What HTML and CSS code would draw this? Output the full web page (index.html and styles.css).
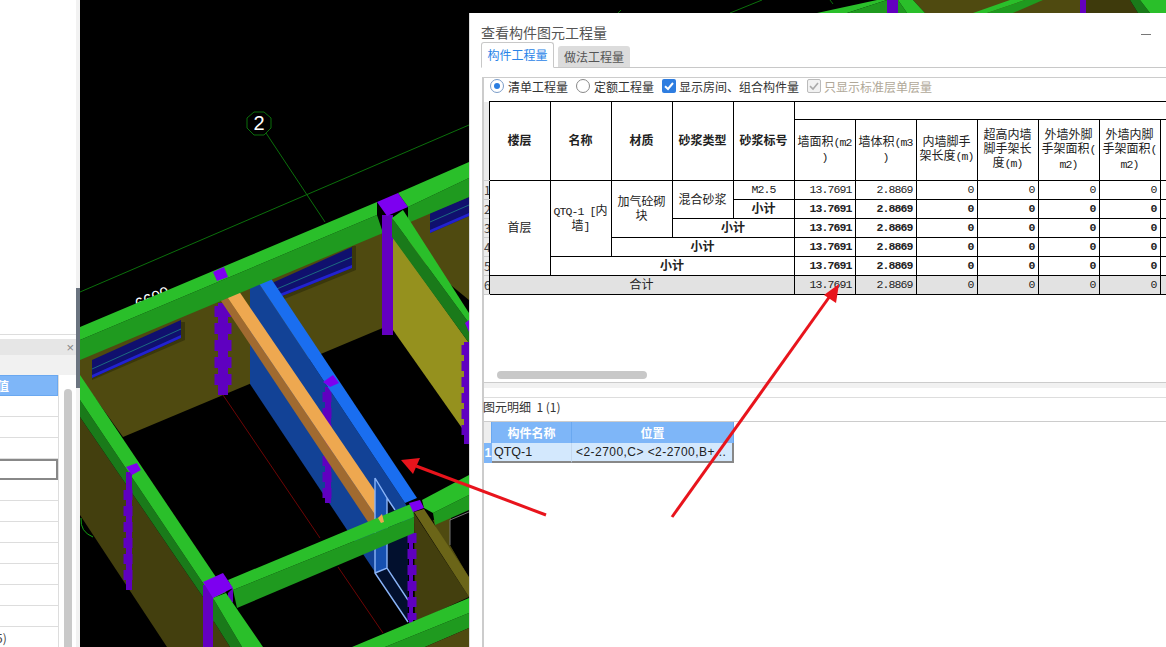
FILE: index.html
```html
<!DOCTYPE html>
<html lang="zh">
<head>
<meta charset="utf-8">
<title>查看构件图元工程量</title>
<link rel="stylesheet" href="styles.css">
</head>
<body>
<div class="app">
  <aside class="left">
    <div class="left-top"></div>
    <div class="left-head"><span class="left-close">×</span></div>
    <div class="left-sub"></div>
    <div class="left-body">
      <div class="list">
        <div class="list-head">值</div>
        <div class="list-row"></div>
        <div class="list-row"></div>
        <div class="list-row"></div>
        <div class="list-row sel"></div>
        <div class="list-row"></div>
        <div class="list-row"></div>
        <div class="list-row"></div>
        <div class="list-row"></div>
        <div class="list-row"></div>
        <div class="list-row"></div>
        <div class="list-row"></div>
        <div class="list-row">5)</div>
      </div>
      <div class="left-scroll"><div class="left-thumb"></div></div>
    </div>
  </aside>
  <div class="splitter"><div class="splitter-grip"></div></div>
  <main class="canvas">
    <svg class="scene" width="1086" height="647" viewBox="80 0 1086 647" xmlns="http://www.w3.org/2000/svg">
      <!-- grid -->
      <g fill="none" stroke="#0b6f0b" stroke-width="1">
        <line x1="80" y1="292" x2="469" y2="125"/>
        <line x1="266" y1="133" x2="325" y2="222"/>
        <polygon points="254,112 264,112 271,118 271,128 264,135 254,135 247,128 247,118"/>
        <line x1="730" y1="13" x2="762" y2="0"/>
        <line x1="830" y1="0" x2="833" y2="4"/>
        <line x1="618" y1="13" x2="621" y2="10"/>
        <path d="M81 518 Q80 532 93 537" stroke="#12a012"/>
      </g>
      <text class="axis" x="259" y="130" text-anchor="middle">2</text>
      <text class="dim" x="138" y="310" transform="rotate(-23 138 310)">6600</text>
      <g stroke="#6d0505" stroke-width="1">
        <line x1="223" y1="395" x2="320" y2="538"/>
        <line x1="338" y1="567" x2="383" y2="633"/>
      </g>

      <!-- back wall -->
      <polygon fill="#4f4a10" points="80,358 385,230 385,327 123,437 80,377"/>
      <polygon fill="#4f4a10" points="408,222 469,196 469,300 408,250"/>
      <g>
        <polygon fill="#3a370c" points="92,380 185,340 185,322 181,322 181,338 92,376"/>
        <polygon fill="#10106e" points="92,360 181,320 181,338 92,378"/>
        <polygon fill="#2222d0" points="92,375 181,335 181,338 92,378"/>
        <line x1="92" y1="369" x2="181" y2="329" stroke="#1c6a80"/>
        <polygon fill="#3a370c" points="272,304 356,270 356,246 352,246 352,268 272,300"/>
        <polygon fill="#10106e" points="272,283 352,247 352,268 272,300"/>
        <polygon fill="#2222d0" points="272,297 352,265 352,268 272,300"/>
        <line x1="272" y1="291" x2="352" y2="257" stroke="#1c6a80"/>
        <polygon fill="#10106e" points="430,213 469,197 469,216 430,233"/>
        <polygon fill="#2222d0" points="430,230 469,213 469,216 430,233"/>
        <line x1="430" y1="222" x2="469" y2="205" stroke="#1c6a80"/>
      </g>

      <!-- jagged column on back wall -->
      <rect class="col-core" x="218" y="303" width="10" height="92"/>
      <line class="col-jag" x1="223" y1="306" x2="223" y2="390"/>

      <!-- blue wall -->
      <polygon fill="#124296" points="250,270 405,503 413,517 375,572 250,384"/>
      <rect class="col-core" x="325" y="387" width="6" height="116"/>
      <line class="col-jag thin" x1="327" y1="392" x2="327" y2="500"/>
      <polygon fill="#1a6ef0" points="250,270 262,265 417,498 405,503"/>
      <polygon fill="#7d00f0" points="323,382 333,375 339,383 330,387"/>

      <!-- orange beam -->
      <polygon fill="#a06a30" points="219,285 219,298 368,522 380,522"/>
      <polygon fill="#eea850" points="219,285 230,278 388,510 380,522"/>

      <!-- opening in blue wall -->
      <polygon fill="#1650b0" points="375,478 387,498 387,570 375,573"/>
      <polygon fill="#02102e" points="387,498 408,530 408,622 375,573 387,568"/>
      <path d="M375 478 V573 L408 622 M375 478 L387 498 V568 M375 573 L387 568 L408 600 M387 498 L395 510" fill="none" stroke="#8ab4f8" stroke-width="1.4"/>

      <!-- back beam -->
      <polygon fill="#1f9a1f" points="80,340 377,215 383,233 80,360"/>
      <polygon fill="#2abf2a" points="80,327 377,202 377,215 80,340"/>
      <polygon fill="#1f9a1f" points="408,207 469,178 469,197 408,223"/>
      <polygon fill="#2abf2a" points="398,193 469,162 469,178 408,207"/>
      <polygon fill="#7d00f0" points="213,272 224,267 228,277 217,281"/>

      <!-- main purple column -->
      <rect x="382" y="215" width="11" height="120" fill="#6400c0"/>
      <polygon fill="#7d00f0" points="377,202 398,193 408,207 387,216"/>

      <!-- yellow wall with beam -->
      <polygon fill="#95911e" points="393,237 469,343 469,438 393,330"/>
      <polygon fill="#1a7a1a" points="392,218 392,237 469,343 469,323"/>
      <polygon fill="#2abf2a" points="392,218 403,210 469,313 469,323"/>
      <polygon fill="#7d00f0" points="465,323 469,320 469,332"/>
      <rect class="col-core" x="464" y="342" width="5" height="102"/>
      <line class="col-jag thin" x1="466" y1="345" x2="466" y2="440"/>

      <!-- left wall and beam -->
      <polygon fill="#433f0e" points="80,417 203,597 203,647 167,647 80,515"/>
      <polygon fill="#1a7a1a" points="80,400 213,598 203,597 80,417"/>
      <polygon fill="#2abf2a" points="80,375 226,592 213,598 80,400"/>
      <rect class="col-core" x="126" y="472" width="6" height="118"/>
      <line class="col-jag thin" x1="128" y1="490" x2="128" y2="584"/>
      <polygon fill="#7d00f0" points="126,467 137,463 141,470 132,475"/>

      <!-- right lower wall -->
      <polygon fill="#4f4a10" points="433,520 451,516 451,546 469,577 440,540"/>
      <polygon fill="#000" points="450,520 469,512 469,577 450,545"/>
      <path d="M450 545 V520 L469 512" fill="none" stroke="#777" stroke-width="1"/>
      <polygon fill="#433f0e" points="414,513 469,597 415,622"/>
      <polygon fill="#6b6518" points="414,512 424,509 469,577 469,597"/>
      <rect class="col-core" x="409" y="533" width="4" height="90"/>
      <line class="col-jag thin" x1="412" y1="533" x2="412" y2="620"/>

      <!-- front beam -->
      <polygon fill="#1f9a1f" points="233,590 414,517 414,533 237,608"/>
      <polygon fill="#2abf2a" points="228,580 413,503 414,517 233,590"/>
      <polygon fill="#1f9a1f" points="433,513 469,495 469,510 435,525"/>
      <polygon fill="#2abf2a" points="422,500 469,475 469,495 433,513 424,508"/>
      <polygon fill="#7d00f0" points="409,503 420,500 424,508 413,512"/>
      <polygon fill="#eea850" points="378,518 382,514 384,522 381,523"/>

      <!-- corner column -->
      <rect x="203" y="585" width="11" height="62" fill="#6400c0"/>
      <polygon fill="#6400c0" points="228,593 233,588 233,602 228,605"/>
      <polygon fill="#7d00f0" points="203,582 223,573 233,588 213,598"/>
      <polygon fill="#433f0e" points="213,620 230,647 213,647"/>
      <polygon fill="#1a7a1a" points="213,598 213,620 230,647 242,647"/>
      <polygon fill="#2abf2a" points="213,598 226,593 263,647 242,647"/>

      <!-- bottom right beam -->
      <polygon fill="#1f9a1f" points="385,647 469,613 469,628 425,647"/>
      <polygon fill="#2abf2a" points="352,647 469,598 469,613 385,647"/>
      <polygon fill="#4f4a10" points="425,647 469,628 469,647"/>

      <!-- strip above dialog -->
      <polygon fill="#4f4a10" points="913,0 1080,0 1080,13 925,13"/>
      <polygon fill="#3e3a0c" points="1086,0 1130,0 1138,13 1086,13"/>
      <polygon fill="#2abf2a" points="817,13 877,0 887,0 847,13"/>
      <polygon fill="#1f9a1f" points="847,13 887,0 887,13"/>
      <rect x="887" y="0" width="11" height="13" fill="#6400c0"/>
      <polygon fill="#1f9a1f" points="898,0 907,13 898,13"/>
      <polygon fill="#2abf2a" points="898,0 913,0 925,13 907,13"/>
      <polygon fill="#2abf2a" points="973,13 1010,0 1025,0 987,13"/>
      <polygon fill="#1f9a1f" points="987,13 1025,0 1043,0 1013,13"/>
      <rect x="1080" y="0" width="6" height="13" fill="#6400c0"/>
      <polygon fill="#1a7a1a" points="1130,0 1140,0 1150,13 1138,13"/>
      <polygon fill="#2abf2a" points="1140,0 1166,0 1166,13 1150,13"/>
    </svg>

    <section class="dialog">
      <h1 class="dlg-title">查看构件图元工程量<span class="dlg-min"></span></h1>
      <div class="tabs">
        <span class="tab active">构件工程量</span>
        <span class="tab">做法工程量</span>
      </div>
      <div class="panel">
        <div class="options">
          <span class="opt"><span class="radio on"></span>清单工程量</span>
          <span class="opt"><span class="radio"></span>定额工程量</span>
          <span class="opt"><span class="check"><svg width="14" height="14" viewBox="0 0 14 14"><path d="M3 7.2 L6 10 L11 4" fill="none" stroke="#fff" stroke-width="2"/></svg></span>显示房间、组合构件量</span>
          <span class="opt off"><span class="check off"><svg width="14" height="14" viewBox="0 0 14 14"><path d="M3 7.2 L6 10 L11 4" fill="none" stroke="#aaa" stroke-width="1.6"/></svg></span>只显示标准层单层量</span>
        </div>
        <div class="grid-wrap">
          <table class="grid">
            <colgroup>
              <col class="c-num">
              <col class="c"><col class="c"><col class="c"><col class="c"><col class="c">
              <col class="c"><col class="c"><col class="c"><col class="c"><col class="c"><col class="c"><col class="c">
            </colgroup>
            <thead>
              <tr class="h1">
                <th class="num" rowspan="2"></th>
                <th class="k" rowspan="2">楼层</th>
                <th class="k" rowspan="2">名称</th>
                <th class="k" rowspan="2">材质</th>
                <th class="k" rowspan="2">砂浆类型</th>
                <th class="k" rowspan="2">砂浆标号</th>
                <th colspan="7"></th>
              </tr>
              <tr class="h2">
                <th class="m">墙面积<span class="lat">(m2)</span></th>
                <th class="m">墙体积<span class="lat">(m3)</span></th>
                <th class="m">内墙脚手架长度<span class="lat">(m)</span></th>
                <th class="m">超高内墙脚手架长度<span class="lat">(m)</span></th>
                <th class="m">外墙外脚手架面积<span class="lat">(m2)</span></th>
                <th class="m">外墙内脚手架面积<span class="lat">(m2)</span></th>
                <th class="m">垂直封闭面积</th>
              </tr>
            </thead>
            <tbody>
              <tr>
                <td class="num">1</td>
                <td class="t" rowspan="5">首层</td>
                <td class="t q" rowspan="4"><span class="lat">QTQ-1 [</span>内墙<span class="lat">]</span></td>
                <td class="t" rowspan="3">加气砼砌块</td>
                <td class="t" rowspan="2">混合砂浆</td>
                <td class="v ctr">M2.5</td>
                <td class="v">13.7691</td><td class="v">2.8869</td><td class="v">0</td><td class="v">0</td><td class="v">0</td><td class="v">0</td><td class="v">0</td>
              </tr>
              <tr class="b">
                <td class="num">2</td>
                <td class="t">小计</td>
                <td class="v">13.7691</td><td class="v">2.8869</td><td class="v">0</td><td class="v">0</td><td class="v">0</td><td class="v">0</td><td class="v">0</td>
              </tr>
              <tr class="b">
                <td class="num">3</td>
                <td class="t" colspan="2">小计</td>
                <td class="v">13.7691</td><td class="v">2.8869</td><td class="v">0</td><td class="v">0</td><td class="v">0</td><td class="v">0</td><td class="v">0</td>
              </tr>
              <tr class="b">
                <td class="num">4</td>
                <td class="t" colspan="3">小计</td>
                <td class="v">13.7691</td><td class="v">2.8869</td><td class="v">0</td><td class="v">0</td><td class="v">0</td><td class="v">0</td><td class="v">0</td>
              </tr>
              <tr class="b">
                <td class="num">5</td>
                <td class="t" colspan="4">小计</td>
                <td class="v">13.7691</td><td class="v">2.8869</td><td class="v">0</td><td class="v">0</td><td class="v">0</td><td class="v">0</td><td class="v">0</td>
              </tr>
              <tr class="total">
                <td class="num">6</td>
                <td class="t" colspan="5">合计</td>
                <td class="v">13.7691</td><td class="v">2.8869</td><td class="v">0</td><td class="v">0</td><td class="v">0</td><td class="v">0</td><td class="v">0</td>
              </tr>
            </tbody>
          </table>
        </div>
        <div class="hscroll"><div class="hthumb"></div></div>
        <div class="sash"></div>
        <div class="detail-title">图元明细&nbsp;&nbsp;1 (1)</div>
        <table class="detail">
          <colgroup><col class="d0"><col class="d1"><col class="d2"></colgroup>
          <thead>
            <tr><th class="dn"></th><th>构件名称</th><th>位置</th></tr>
          </thead>
          <tbody>
            <tr><td class="dn on">1</td><td>QTQ-1</td><td class="pos">&lt;2-2700,C&gt; &lt;2-2700,B+...</td></tr>
          </tbody>
        </table>
      </div>
    </section>

    <svg class="arrows" width="1086" height="647" viewBox="80 0 1086 647" xmlns="http://www.w3.org/2000/svg">
      <line x1="546" y1="515" x2="416" y2="466" stroke="#e8141c" stroke-width="3"/>
      <polygon fill="#e8141c" points="401,460 420,458 413,474"/>
      <line x1="672" y1="517" x2="830" y2="296" stroke="#e8141c" stroke-width="3"/>
      <polygon fill="#e8141c" points="839,284 824,295 836,303"/>
    </svg>
  </main>
</div>
</body>
</html>
```

FILE: styles.css
```css
* { box-sizing: border-box; }
html, body { margin: 0; height: 100%; overflow: hidden; background: #fff; }
body { font-family: "Noto Sans CJK SC", "Liberation Sans", sans-serif; font-size: 12px; color: #222; }

.app { display: flex; width: 1166px; height: 647px; overflow: hidden; }

/* left property panel */
.left { width: 76px; height: 647px; display: flex; flex-direction: column; flex: none; background: #fff; overflow: hidden; }
.left-top { height: 335px; flex: none; border-bottom: 1px solid #ddd; }
.left-head { height: 16px; flex: none; margin-top: 4px; background: #e6e6e6; display: flex; justify-content: flex-end; align-items: center; padding-right: 2px; }
.left-close { color: #888; font-size: 13px; line-height: 1; font-family: "Liberation Sans", sans-serif; }
.left-sub { height: 20px; flex: none; background: #f1f1f1; }
.left-body { flex: 1; display: flex; min-height: 0; }
.list { width: 59px; flex: none; border-right: 1px solid #ddd; }
.list-head { height: 21px; background: #7eb6f8; color: #fff; font-weight: 700; font-size: 12px; line-height: 20px; margin-left: -3px; border: 1px solid #6aa8f0; border-left: 0; }
.list-row { height: 21px; border-bottom: 1px solid #ddd; font-size: 12px; line-height: 21px; color: #444; text-indent: -4px; }
.list-row.sel { border: 2px solid #888; border-left: 0; }
.left-scroll { flex: 1; padding: 14px 4px 0 5px; }
.left-thumb { width: 8px; height: 100%; background: #c9c9c9; border-radius: 4px 4px 0 0; }

.splitter { width: 4px; flex: none; background: #f2f2f2; padding-top: 288px; }
.splitter-grip { height: 100px; background: #6b7480; }

/* drawing */
.canvas { position: relative; flex: 1; background: #000; overflow: hidden; }
.scene { position: absolute; left: 0; top: 0; display: block; }
.axis { fill: #fff; font: 20px "Liberation Sans", sans-serif; }
.dim { fill: #fff; font: 16px "Liberation Sans", sans-serif; }
.col-core { fill: #5f00c0; }
.col-jag { stroke: #5f00c0; stroke-width: 17; stroke-dasharray: 11 6; }
.col-jag.thin { stroke-width: 9; stroke-dasharray: 10 6; }
.arrows { position: absolute; left: 0; top: 0; pointer-events: none; }

/* dialog */
.dialog { position: absolute; left: 389px; top: 13px; right: 0; bottom: 0; background: #fff; border-left: 1px solid #ddd; padding-left: 11px; display: flex; flex-direction: column; overflow: hidden; }
.dlg-title { margin: 0; height: 29px; flex: none; font-size: 14px; font-weight: 400; line-height: 38px; color: #555; position: relative; }
.dlg-min { position: absolute; right: 15px; top: 21px; width: 10px; height: 1px; background: #777; }
.tabs { display: flex; align-items: flex-end; gap: 4px; height: 26px; flex: none; border-bottom: 1px solid #c8c8c8; }
.tab { width: 72px; height: 21px; background: #dcdcdc; border-radius: 3px 3px 0 0; text-align: center; line-height: 21px; color: #555; }
.tab.active { width: 73px; height: 26px; background: #fff; border: 1px solid #c8c8c8; border-bottom: 1px solid #fff; margin-bottom: -1px; color: #2a84e8; line-height: 24px; }

.panel { flex: 1; margin-top: 9px; border-left: 2px solid #ccc; border-top: 1px solid #ccc; min-height: 0; display: flex; flex-direction: column; margin-left: 1px; }
.options { height: 23px; flex: none; display: flex; align-items: center; padding: 0 0 7px 6px; color: #333; white-space: nowrap; }
.opt { display: inline-flex; align-items: center; margin-right: 8px; }
.opt.off { color: #b0a898; }
.radio { width: 14px; height: 14px; border: 1px solid #888; border-radius: 50%; margin-right: 4px; background: #fff; position: relative; flex: none; }
.radio.on { border-color: #7a9cc8; }
.radio.on::after { content: ""; position: absolute; left: 3px; top: 3px; width: 6px; height: 6px; border-radius: 50%; background: #2a7de1; }
.check { width: 14px; height: 14px; border-radius: 2px; background: #2e7de0; margin-right: 3px; flex: none; display: flex; }
.check.off { background: #f2f2f2; border: 1px solid #bbb; }
.check.off svg { margin: -1px; }

.grid-wrap { height: 270px; flex: none; overflow: hidden; }
.grid { border-collapse: collapse; table-layout: fixed; width: 737px; }
.c-num { width: 5px; }
.c { width: 61px; }
.grid th, .grid td { border: 1px solid #000; padding: 0; overflow: hidden; }
.grid th { font-weight: 700; font-size: 12px; color: #222; }
.grid th.k { padding-bottom: 3px; }
.h1 { height: 18px; }
.h2 { height: 61px; }
.grid tbody tr { height: 19px; }
.grid th.m { font-weight: 400; line-height: 14px; padding: 0 1px 3px; word-break: break-all; line-break: anywhere; }
.grid .num { background: #ebebeb; border: 0; border-bottom: 1px solid #ccc; color: #444; font-size: 12px; font-weight: 400; text-align: left; white-space: nowrap; line-height: 14px; }
.lat { font-family: "Liberation Mono", monospace; font-size: 11.5px; letter-spacing: -0.9px; line-height: 1; }
.grid td.t { text-align: center; line-height: 14px; padding: 0 3px 2px; }
.grid td.t.q { padding: 0 0 2px; line-break: anywhere; }
.grid td.v { text-align: right; font-family: "Liberation Mono", monospace; font-size: 11.5px; letter-spacing: -0.9px; padding: 0 3px 2px 0; }
.grid td.v.ctr { text-align: center; padding-right: 0; }
.grid tr.b td { font-weight: 700; }
.grid tr.b td.num { font-weight: 400; }
.total td { background: #e2e2e2; }

.hscroll { height: 11px; flex: none; padding-left: 13px; }
.hthumb { width: 150px; height: 8px; background: #c8c8c8; border-radius: 4px; }
.sash { height: 16px; flex: none; border-top: 1px solid #ccc; border-bottom: 1px solid #ddd; background: linear-gradient(#f1f1f1 5px, #fff 5px); }
.detail-title { height: 24px; flex: none; line-height: 18px; margin-left: -1px; color: #333; border-bottom: 1px solid #ccc; font-family: "Noto Sans CJK SC", sans-serif; }
.detail { border-collapse: separate; border-spacing: 0; table-layout: fixed; width: 250px; flex: none; }
.d0 { width: 8px; }
.d1 { width: 80px; }
.detail th { height: 21px; padding: 0; background: #7eb6f8; color: #fff; font-weight: 700; font-size: 12px; border-right: 1px solid #6aa8f0; }
.detail th.dn { background: #eee; }
.detail td { height: 20px; padding: 0 0 0 2px; background: #d3e8fd; border-right: 1px solid #c4d8ee; border-bottom: 2px solid #888; font-family: "Liberation Sans", sans-serif; font-size: 12.5px; color: #222; white-space: nowrap; overflow: hidden; }
.detail td.pos { font-size: 12px; letter-spacing: 0.45px; padding-left: 4px; border-right: 2px solid #888; }
.detail td.dn { background: #7eb6f8; color: #fff; font-weight: 700; padding: 0; text-align: center; border-bottom: 0; border-right: 0; }
```
